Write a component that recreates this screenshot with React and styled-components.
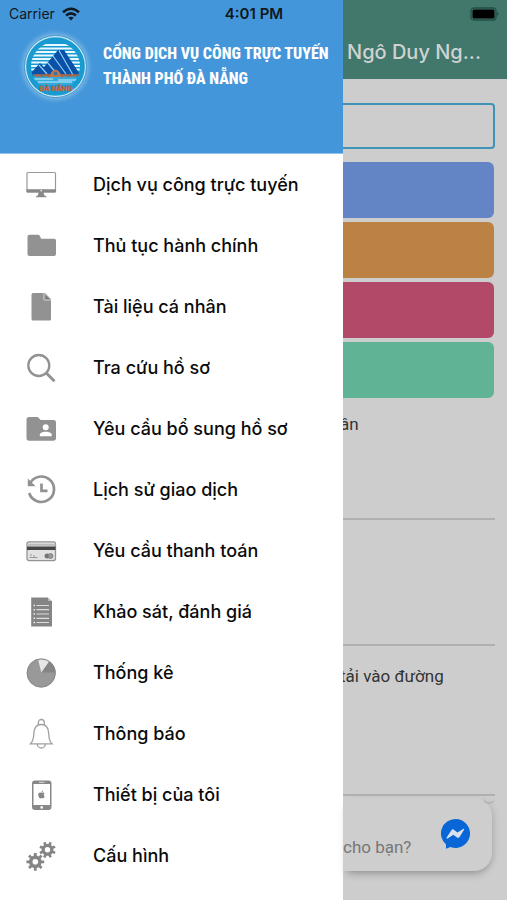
import React from "react";
import styled, { createGlobalStyle } from "styled-components";
import { FaApple } from "react-icons/fa";

const GlobalStyle = createGlobalStyle`
  *, *::before, *::after { box-sizing: border-box; }
  body { margin: 0; font-family: Inter, "Noto Sans", sans-serif; color: #0b0b0b; }
`;

const Screen = styled.div`
  position: relative;
  display: grid;
  grid-template-columns: 343px minmax(0, 1fr);
  min-height: 100vh;
  overflow: hidden;
  background: #cdcdcd;
`;

const StatusBar = styled.div`
  position: absolute;
  inset: 0 0 auto 0;
  display: grid;
  grid-template-columns: 1fr auto 1fr;
  align-items: center;
  height: 27px;
  padding: 0 8px 0 9px;
  font-size: 14px;
  color: #101820;
`;
const Carrier = styled.span`
  display: flex;
  align-items: center;
  gap: 7px;
`;
const Clock = styled.time`
  font-size: 15px;
  font-weight: 600;
`;
const BatterySlot = styled.span`
  display: flex;
  justify-content: flex-end;
`;

const Drawer = styled.aside`
  background: #fff;
`;
const Brand = styled.header`
  display: flex;
  align-items: flex-start;
  gap: 8px;
  height: 154px;
  padding: 28px 12px 0 16px;
  background: #4496da;
  border-bottom: 1px solid #8fc3ec;
`;
const Logo = styled.svg`
  flex: none;
  width: 79px;
  height: 79px;
`;
const Title = styled.h1`
  margin: 0;
  padding-top: 13px;
  font: 800 16px/25px "Roboto Condensed", "Liberation Sans Narrow", sans-serif;
  color: #fff;
  white-space: nowrap;
`;
const MenuLink = styled.a`
  display: flex;
  align-items: center;
  gap: 36px;
  height: 61px;
  padding-left: 25px;
  font-size: 18px;
  font-weight: 500;
  color: #0b0b0b;
  text-decoration: none;
  white-space: nowrap;
`;
const Glyph = styled.svg`
  flex: none;
  width: 32px;
  height: 32px;
  color: #929292;
`;

const Main = styled.main`
  overflow: hidden;
`;
const TopBar = styled.header`
  display: flex;
  align-items: flex-end;
  height: 79px;
  padding: 0 4px 12px;
  background: #42776b;
`;
const UserName = styled.h2`
  margin: 0;
  font-size: 20px;
  line-height: 30px;
  font-weight: 500;
  color: #cfd3d1;
  white-space: nowrap;
`;
const SearchInput = styled.input`
  display: block;
  width: calc(100% - 12px);
  height: 46px;
  margin: 24px 0 13px;
  border: 2px solid #4092b6;
  border-left: 0;
  border-radius: 0 4px 4px 0;
  background: #cdcdcd;
  font: 400 16px Roboto, sans-serif;
`;
const Tiles = styled.div`
  display: grid;
  gap: 4px;
  padding-right: 13px;
`;
const Tile = styled.button`
  height: 56px;
  border: 0;
  border-radius: 0 6px 6px 0;
  background: ${(p) => p.$color};
`;
const Entry = styled.article`
  height: ${(p) => p.$height};
  margin-right: 12px;
  padding-top: ${(p) => (p.$first ? "12px" : "16px")};
  border-bottom: 2px solid #b0b0b0;
  font: 400 17px/28px Roboto, sans-serif;
  color: #333;
  white-space: nowrap;
`;
const EntryText = styled.p`
  margin: 0 0 0 -3px;
`;
const Chat = styled.aside`
  position: absolute;
  left: 343px;
  right: 15px;
  bottom: 29px;
  display: flex;
  align-items: flex-end;
  justify-content: space-between;
  height: 73px;
  padding: 0 22px 10px 0;
  border-radius: 0 18px 18px 0;
  background: #cecece;
  box-shadow: 0 6px 8px -4px rgba(0, 0, 0, 0.3), 5px 0 8px -4px rgba(0, 0, 0, 0.12);
  font: 400 17px/28px Roboto, sans-serif;
  color: #777;

  &::after {
    content: "";
    position: absolute;
    top: 0;
    right: -3px;
    width: 12px;
    height: 6px;
    border-bottom: 2px solid #b4b4b4;
    border-radius: 0 0 6px 6px;
  }
`;
const ChatButton = styled.button`
  display: flex;
  padding: 0 0 12px;
  border: 0;
  background: none;
`;

function gear(cx, cy, outer, inner, hole, teeth, turn) {
  const step = (Math.PI * 2) / teeth;
  const at = (r, a) => `${(cx + r * Math.cos(a)).toFixed(2)} ${(cy + r * Math.sin(a)).toFixed(2)}`;
  const points = [];
  for (let i = 0; i < teeth; i += 1) {
    const a = i * step + turn;
    points.push(at(inner, a - step * 0.28), at(outer, a - step * 0.2), at(outer, a + step * 0.2), at(inner, a + step * 0.28));
  }
  return `M${points.join("L")}ZM${cx - hole} ${cy}a${hole} ${hole} 0 1 0 ${hole * 2} 0a${hole} ${hole} 0 1 0 ${-hole * 2} 0Z`;
}

const icons = {
  monitor: (
    <>
      <rect x="2" y="3.5" width="28.5" height="19.5" rx="1" fill="#fff" stroke="#999" strokeWidth="1.2" />
      <path fill="#888" d="M1.5 20.2h29.5v2.3q0 1-1 1H2.5q-1 0-1-1zM13.5 23.5h5l.7 2.8 2.3 1.2v.8H10.800v-.8l2.2-1.2z" />
      <circle cx="16.2" cy="21.7" r=".8" fill="#fff" />
    </>
  ),
  folder: <path fill="currentColor" d="M4.5 4.800H13q1.200 0 1.700 1l1.500 2.900H29.200q1.800 0 1.800 1.800v13.500q0 2-2 2H4.500q-2 0-2-2V6.800q0-2 2-2z" />,
  file: (
    <>
      <path fill="currentColor" d="M8 2h10.500v6q0 1.500 1.500 1.500h6V28q0 1.500-1.500 1.500H8Q6.500 29.500 6.500 28V3.500Q6.500 2 8 2z" />
      <path fill="#a8a8a8" d="M18.500 2h1.500l6 6v1.500h-6q-1.500 0-1.500-1.500z" />
      <path fill="#777" d="M20.500 4 24.500 8h-4z" />
    </>
  ),
  search: (
    <g fill="none" stroke="currentColor">
      <circle cx="13.800" cy="13.500" r="10.500" strokeWidth="2.300" />
      <path d="m21.500 21.200 8 8" strokeWidth="3" />
    </g>
  ),
  person: (
    <>
      <path fill="currentColor" d="M4 4h8.700l3 3H28.500q2.500 0 2.500 2.500V25q0 2.700-2.700 2.700H4q-2.500 0-2.500-2.700V6.500Q1.500 4 4 4z" />
      <circle cx="20.700" cy="14.200" r="3" fill="#fff" />
      <path fill="#fff" d="M14.800 23.300v-1.500c0-4 12-4 12 0v1.500z" />
    </>
  ),
  history: (
    <g fill="none" stroke="currentColor">
      <path d="M5 9.500A12.700 12.700 0 1 1 4.200 19" strokeWidth="2.700" />
      <path d="M2.800 4.500v7.800h7.800z" fill="currentColor" stroke="none" />
      <path d="M16.500 9.500v7.300h6" strokeWidth="2.700" />
    </g>
  ),
  card: (
    <>
      <rect x="2" y="6.800" width="28.500" height="18.800" rx="2" fill="#e2e2e2" stroke="#949494" strokeWidth="1.300" />
      <path d="M2 8.800h28.500v2H2z" fill="#bbb" />
      <path d="M2 11.500h28.500v3.500H2z" fill="#454545" />
      <path d="M5 20h2m1 1h2M4.500 22.500h8" stroke="#999" fill="none" />
      <circle cx="22" cy="21" r="2.500" fill="#777" />
      <circle cx="25.500" cy="21" r="2.500" fill="#999" stroke="#666" strokeWidth=".6" />
    </>
  ),
  survey: (
    <>
      <path fill="#858585" d="M6.200 1.500H23v3.500h4V30.500H6.200z" />
      <path d="M23 1.500v3.500h4" fill="#bbb" />
      <path d="M11.500 9.500H24M11.500 13.700H24M11.500 18H24M11.500 22.300H24M11.500 26.500H24" stroke="#ddd" strokeWidth="1.200" />
      <path d="M8.500 9.500h1.500M8.500 13.700h1.500M8.500 18h1.500M8.500 22.300h1.500M8.500 26.500h1.500" stroke="#eee" strokeWidth="1.600" />
    </>
  ),
  pie: (
    <>
      <circle cx="16.200" cy="16" r="14.500" fill="#999" />
      <path d="M16.300 15.500 24.200 4.200q6.500 4.500 6.500 11.300z" fill="#858585" />
      <path d="M16.300 15.500 13 2.200Q19 .5 24.200 4.200z" fill="#e6e6e6" />
      <circle cx="16.200" cy="16" r="14" fill="none" stroke="#8b8b8b" />
    </>
  ),
  bell: (
    <g fill="none" stroke="#a0a0a0" strokeWidth="1.300">
      <path d="M13.300 7V4.500a3 3 0 0 1 6 0V7" />
      <path d="M16.300 6.500c-5 0-7.300 3.500-7.500 9-.1 5-1 8-3.300 10.300h21.500c-2.300-2.300-3.200-5.300-3.300-10.300-.2-5.500-2.500-9-7.400-9z" />
      <path d="M12.300 26a4 4 0 0 0 8 0" />
    </g>
  ),
  phone: (
    <>
      <rect x="7" y="1.500" width="19.500" height="29.500" rx="3" fill="#888" />
      <path d="M8.500 5h16.500v21H8.500z" fill="#fff" />
      <path d="M14 3.300h5.500" stroke="#ddd" />
      <circle cx="16.700" cy="28.400" r="1.300" fill="#fff" />
      <FaApple x="12" y="11" size="9" color="#858585" />
    </>
  ),
  gears: (
    <g fill="#858585" fillRule="evenodd">
      <path d={gear(22.5, 9.8, 8.3, 6, 2.7, 8, 0.39)} />
      <path d={gear(10.3, 21.8, 9, 6.4, 2.8, 8, 0)} />
    </g>
  ),
};

const menu = [
  ["monitor", "Dịch vụ công trực tuyến"],
  ["folder", "Thủ tục hành chính"],
  ["file", "Tài liệu cá nhân"],
  ["search", "Tra cứu hồ sơ"],
  ["person", "Yêu cầu bổ sung hồ sơ"],
  ["history", "Lịch sử giao dịch"],
  ["card", "Yêu cầu thanh toán"],
  ["survey", "Khảo sát, đánh giá"],
  ["pie", "Thống kê"],
  ["bell", "Thông báo"],
  ["phone", "Thiết bị của tôi"],
  ["gears", "Cấu hình"],
];

const tiles = [
  ["#6485c5", "Dịch vụ công trực tuyến"],
  ["#bb8244", "Thủ tục hành chính"],
  ["#b24969", "Tài liệu cá nhân"],
  ["#60b394", "Tra cứu hồ sơ"],
];

function CityLogo() {
  return (
    <Logo viewBox="0 0 79 79" aria-hidden="true">
      <defs>
        <radialGradient id="halo">
          <stop offset=".76" stopColor="#8fcbec" />
          <stop offset="1" stopColor="#4496da" stopOpacity="0" />
        </radialGradient>
        <clipPath id="disc"><circle cx="39.500" cy="38.500" r="24.500" /></clipPath>
      </defs>
      <circle cx="39.500" cy="38.500" r="38.500" fill="url(#halo)" />
      <circle cx="39.500" cy="38.500" r="30" fill="#199bd2" stroke="#c8edfb" strokeWidth="1.300" />
      <circle cx="39.500" cy="38.500" r="31" fill="none" stroke="#417fb2" strokeWidth=".7" />
      <g clipPath="url(#disc)">
        <path d="M15 17h49M15 20.500h49M15 24h49M15 27.500h49M15 31h49M15 34.500h49M15 38h49M15 41.500h49" stroke="#e9f8ff" strokeWidth="2.200" />
        <path d="M14 46 24 35l4 4 14-17h6l17 26H14z" fill="#0950a8" />
        <path d="M43 22.500 57 47M37 28l13 18M31 34l10 12M23 37l8 9" stroke="#8fd0f2" strokeWidth="1.200" />
        <path d="M15 49h49v8H15z" fill="#33aadd" />
        <path d="M17 51h20m5 1h19M22 54h34" stroke="#c9efff" strokeWidth="1.200" />
      </g>
      <path d="M17 47h46M19 49q3-3 6 0M27 49q3-3 6 0M46 49q3-3 6 0M54 49q3-3 6 0" fill="none" stroke="#b36b45" strokeWidth="1.500" />
      <path d="M34 49q0-6 5.500-7.500Q45 43 45 49z" fill="#c67645" />
      <circle cx="39.500" cy="45.500" r="2" fill="#3576ad" />
      <text x="40" y="63" textAnchor="middle" fontFamily="Liberation Sans, sans-serif" fontWeight="700" fontSize="7" fill="#ed7124" stroke="#ac5431" strokeWidth=".3">ĐÀ NẴNG</text>
    </Logo>
  );
}

function Wifi() {
  return (
    <svg width="18" height="14" viewBox="0 0 18 14" aria-hidden="true" fill="none" stroke="#101820" strokeWidth="2.500">
      <path d="M1 5.200q8-7 16 0M4 8.500q5-4.300 10 0" />
      <path d="m6.200 10.500 2.800 3 2.800-3Q9 8.800 6.200 10.500z" fill="#101820" stroke="none" />
    </svg>
  );
}

function Battery() {
  return (
    <svg width="30" height="14" viewBox="0 0 30 14" aria-hidden="true">
      <rect x="2" y="1" width="25" height="12" rx="3" fill="none" stroke="#244f46" strokeWidth="1.300" />
      <rect x="3.500" y="2.500" width="22" height="9" rx="1.500" fill="#000" />
      <path d="M28 5q3 2 0 4z" fill="#244f46" />
    </svg>
  );
}

export default function App() {
  return (
    <>
      <GlobalStyle />
      <Screen>
        <Drawer>
          <Brand>
            <CityLogo />
            <Title>CỔNG DỊCH VỤ CÔNG TRỰC TUYẾN<br />THÀNH PHỐ ĐÀ NẴNG</Title>
          </Brand>
          <nav>
            {menu.map(([icon, label]) => (
              <MenuLink href="#" key={icon}>
                <Glyph viewBox="0 0 32 32" aria-hidden="true">{icons[icon]}</Glyph>
                {label}
              </MenuLink>
            ))}
          </nav>
        </Drawer>
        <Main>
          <TopBar><UserName>Ngô Duy Ng...</UserName></TopBar>
          <SearchInput type="search" aria-label="Tra cứu" />
          <Tiles>
            {tiles.map(([color, label]) => <Tile key={color} $color={color} aria-label={label} />)}
          </Tiles>
          <Entry $first $height="122px"><EntryText>ân</EntryText></Entry>
          <Entry $height="126px" />
          <Entry $height="150px"><EntryText>tải vào đường</EntryText></Entry>
        </Main>
        <Chat>
          <span>cho bạn?</span>
          <ChatButton aria-label="Messenger">
            <svg width="29" height="30" viewBox="0 0 29 30" aria-hidden="true">
              <path fill="#0866d6" d="M14.500 0a14.500 14.500 0 1 1-5 28.100L5 29.800V25.500A14.500 14.500 0 0 1 14.500 0z" />
              <path fill="#d9e2ee" d="m5.500 18.800 4.700-7.400q1.300-1.800 3-.5l3.200 2.700 6.200-3.800q1-.3.600.8l-4.600 7.300q-1.300 1.600-3 .4l-3.200-2.600-5.900 3.900q-1 .2-1-.8z" />
            </svg>
          </ChatButton>
        </Chat>
        <StatusBar>
          <Carrier>Carrier <Wifi /></Carrier>
          <Clock>4:01 PM</Clock>
          <BatterySlot><Battery /></BatterySlot>
        </StatusBar>
      </Screen>
    </>
  );
}
